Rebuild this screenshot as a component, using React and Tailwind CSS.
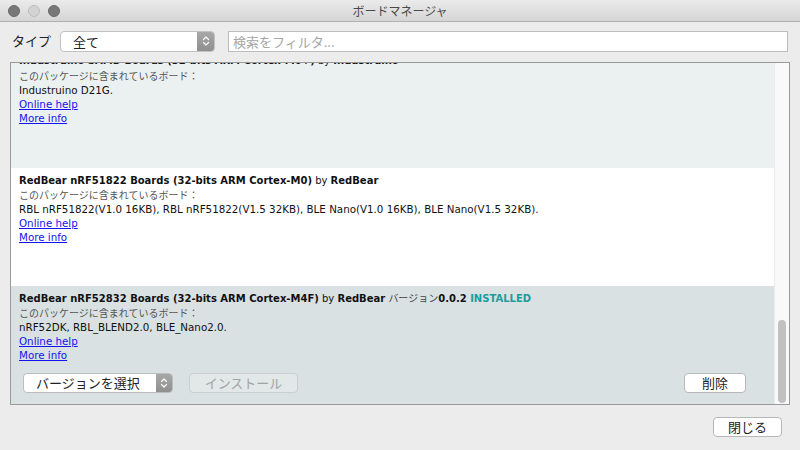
import React from "react";

const F = { fontFamily: '"DejaVu Sans", "Noto Sans CJK JP", sans-serif' };
const J = { fontFamily: '"Noto Sans CJK JP", "DejaVu Sans", sans-serif' };

function Chevrons({ light = true }) {
  return (
    <svg width="8" height="12" viewBox="0 0 8 12" fill="none">
      <path d="M1.5 4.5 L4 2 L6.5 4.5" stroke={light ? "#ffffff" : "#444"} strokeWidth="1.2" strokeLinecap="round" strokeLinejoin="round" />
      <path d="M1.5 7.5 L4 10 L6.5 7.5" stroke={light ? "#ffffff" : "#444"} strokeWidth="1.2" strokeLinecap="round" strokeLinejoin="round" />
    </svg>
  );
}

function Links() {
  return (
    <>
      <div className="leading-[14px] text-[10.3px] text-[#1414ee] underline">Online help</div>
      <div className="leading-[14px] text-[10.3px] text-[#1414ee] underline">More info</div>
    </>
  );
}

function Sub() {
  return (
    <div className="leading-[14px] text-[10px] text-[#555]" style={J}>
      このパッケージに含まれているボード：
    </div>
  );
}

export default function App() {
  return (
    <div className="w-[800px] h-[450px] bg-[#ececec] flex flex-col overflow-hidden" style={F}>
      {/* title bar */}
      <div className="h-[22px] shrink-0 flex items-center border-b border-[#b1b1b1] bg-gradient-to-b from-[#ebebeb] to-[#d5d5d5]">
        <div className="w-[80px] flex items-center gap-[8px] pl-[8px]">
          <div className="w-[12px] h-[12px] rounded-full bg-[#787878] border border-[#6a6a6a]" />
          <div className="w-[12px] h-[12px] rounded-full bg-[#d2d2d2] border border-[#bdbdbd]" />
          <div className="w-[12px] h-[12px] rounded-full bg-[#787878] border border-[#6a6a6a]" />
        </div>
        <div className="flex-1 text-center text-[12px] text-[#4a4a4a]" style={J}>ボードマネージャ</div>
        <div className="w-[80px]" />
      </div>

      {/* toolbar */}
      <div className="flex items-center pl-[12px] pr-[12px] pt-[8px] h-[30px] shrink-0">
        <div className="text-[13px] text-[#222] w-[48px]" style={J}>タイプ</div>
        <div className="w-[155px] h-[21px] flex rounded-[4px] border border-[#c2c2c2] bg-white overflow-hidden">
          <div className="flex-1 pl-[12px] text-[13px] leading-[19px] text-[#222]" style={J}>全て</div>
          <div className="w-[17px] bg-gradient-to-b from-[#a8a8a8] to-[#8f8f8f] flex items-center justify-center">
            <Chevrons />
          </div>
        </div>
        <div className="ml-[13px] flex-1 h-[21px] border border-[#bdbdbd] bg-white pl-[4px] text-[13px] leading-[19px] text-[#a6a6a6]" style={J}>
          検索をフィルタ...
        </div>
      </div>

      {/* list */}
      <div className="mx-[10px] w-[780px] mt-[10px] h-[343px] shrink-0 border border-[#999] flex bg-white">
        <div className="flex-1 flex flex-col overflow-hidden">
          {/* item 1 (scrolled) */}
          <div className="h-[105px] shrink-0 bg-[#ebf0f0] overflow-hidden">
            <div className="pl-[8px] pt-[6px] mt-[-14px]">
              <div className="leading-[14px] text-[10px] text-[#111] mt-[-1px] mb-[1px]">
                <span className="font-bold">Industruino SAMD Boards (32-bits ARM Cortex-M0+)</span> by <span className="font-bold">Industruino</span>
              </div>
              <Sub />
              <div className="leading-[14px] text-[10.3px] text-[#111]">Industruino D21G.</div>
              <Links />
            </div>
          </div>
          {/* item 2 */}
          <div className="h-[118px] shrink-0 bg-white pl-[8px] pt-[6px]">
            <div className="leading-[14px] text-[10px] text-[#111]">
              <span className="font-bold">RedBear nRF51822 Boards (32-bits ARM Cortex-M0)</span> by <span className="font-bold">RedBear</span>
            </div>
            <Sub />
            <div className="leading-[14px] text-[10.3px] text-[#111]">
              RBL nRF51822(V1.0 16KB), RBL nRF51822(V1.5 32KB), BLE Nano(V1.0 16KB), BLE Nano(V1.5 32KB).
            </div>
            <Links />
          </div>
          {/* item 3 selected */}
          <div className="flex-1 bg-[#d9e1e2] pl-[8px] pt-[5px]">
            <div className="leading-[14px] text-[10px] text-[#111] flex items-baseline whitespace-pre">
              <span className="font-bold">RedBear nRF52832 Boards (32-bits ARM Cortex-M4F)</span>
              <span> by </span>
              <span className="font-bold">RedBear</span>
              <span> </span>
              <span className="text-[10px] text-[#444]" style={J}>バージョン</span>
              <span className="font-bold">0.0.2 </span>
              <span className="font-bold text-[#1e9c9c]">INSTALLED</span>
            </div>
            <Sub />
            <div className="leading-[14px] text-[10.3px] text-[#111]">nRF52DK, RBL_BLEND2.0, BLE_Nano2.0.</div>
            <Links />
            <div className="mt-[11px] flex items-center pl-[4px] pr-[28px]">
              <div className="w-[150px] h-[20px] flex rounded-[4px] border border-[#bdbdbd] bg-white overflow-hidden">
                <div className="flex-1 pl-[12px] text-[13px] leading-[18px] text-[#222]" style={J}>バージョンを選択</div>
                <div className="w-[16px] bg-gradient-to-b from-[#a8a8a8] to-[#8f8f8f] flex items-center justify-center">
                  <Chevrons />
                </div>
              </div>
              <div className="ml-[16px] w-[109px] h-[20px] rounded-[4px] border border-[#c9cfd0] bg-[#e2e7e8] text-center text-[13px] leading-[18px] text-[#a3a3a3]" style={J}>
                インストール
              </div>
              <div className="flex-1" />
              <div className="w-[62px] h-[20px] rounded-[4px] border border-[#b7b7b7] bg-white text-center text-[13px] leading-[18px] text-[#222]" style={J}>
                削除
              </div>
            </div>
          </div>
        </div>
        {/* scrollbar */}
        <div className="w-[15px] shrink-0 bg-[#f9f9f9] border-l border-[#ececec] flex flex-col justify-end items-center pb-[1px]">
          <div className="w-[8px] h-[83px] rounded-full bg-[#c1c1c1]" />
        </div>
      </div>

      {/* footer */}
      <div className="flex justify-end pr-[18px] pt-[12px]">
        <div className="w-[69px] h-[20px] rounded-[4px] border border-[#b7b7b7] bg-white text-center text-[13px] leading-[18px] text-[#222]" style={J}>
          閉じる
        </div>
      </div>
    </div>
  );
}
